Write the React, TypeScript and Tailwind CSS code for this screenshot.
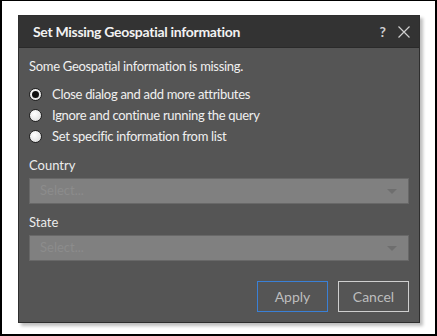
import React from 'react';

const Radio = ({ checked, label }: { checked?: boolean; label: string }) => (
    <label className="flex items-center h-[21px] gap-[10px]">
        <span className="w-[13px] h-[13px] rounded-full border border-[#222] bg-[radial-gradient(circle_at_40%_35%,#ffffff,#d8d8d8)] flex items-center justify-center shrink-0">
            {checked && <span className="w-[7px] h-[7px] rounded-full bg-[#111]"></span>}
        </span>
        <span className="text-[13px] tracking-[-0.3px] text-[#f0f0f0]">{label}</span>
    </label>
);

const Select = () => (
    <div className="h-[26px] bg-[#808080] border border-[#686868] flex items-center justify-between pl-[10px] pr-[11px]">
        <span className="text-[13px] text-[#8c8c8c]">Select...</span>
        {/* dropdown caret */}
        <svg width="10" height="5" viewBox="0 0 10 5">
            <path d="M0 0 L10 0 L5 5 Z" fill="#6e6e6e" />
        </svg>
    </div>
);

const App = () => {
    return (
        <div className="w-[437px] h-[336px] bg-white border-2 border-t border-black pl-[16px] pt-[14px] font-['Lato',sans-serif]">
            {/* Dialog */}
            <div className="w-[402px] h-[308px] bg-[#555555] border border-[#2e2e2e] shadow-[3px_3px_3px_rgba(0,0,0,0.25)] flex flex-col">
                {/* Header */}
                <div className="h-[32px] bg-[#333333] border-b border-[#2a2a2a] flex items-center justify-between pl-[14px] pr-[9px]">
                    <span className="text-[14px] font-bold tracking-[-0.3px] text-[#f2f2f2]">Set Missing Geospatial information</span>
                    <div className="flex items-center gap-[12px]">
                        <span className="text-[14px] font-bold text-[#cfcfcf]">?</span>
                        <svg width="12" height="12" viewBox="0 0 12 12">
                            <path d="M0.5 0.5 L11.5 11.5 M11.5 0.5 L0.5 11.5" stroke="#cfcfcf" strokeWidth="1.2" />
                        </svg>
                    </div>
                </div>

                {/* Body */}
                <div className="flex-1 px-[10px] pt-[9px] flex flex-col">
                    <div className="h-[20px] flex items-center text-[13px] tracking-[-0.3px] text-[#f0f0f0]">Some Geospatial information is missing.</div>

                    <div className="mt-[7px] flex flex-col">
                        <Radio checked label="Close dialog and add more attributes" />
                        <Radio label="Ignore and continue running the query" />
                        <Radio label="Set specific information from list" />
                    </div>

                    <div className="mt-[9px] h-[20px] flex items-center text-[13px] text-[#ececec]">Country</div>
                    <div className="mt-[2px]"><Select /></div>

                    <div className="mt-[9px] h-[20px] flex items-center text-[13px] text-[#ececec]">State</div>
                    <div className="mt-[2px]"><Select /></div>

                    <div className="mt-[20px] flex justify-end gap-[10px]">
                        <button className="w-[71px] h-[31px] border border-[#3a80d6] text-[14px] text-[#bdbdbd]">Apply</button>
                        <button className="w-[71px] h-[31px] border border-[#cfcfcf] text-[14px] text-[#bdbdbd]">Cancel</button>
                    </div>
                </div>
            </div>
        </div>
    );
};

export default App;
